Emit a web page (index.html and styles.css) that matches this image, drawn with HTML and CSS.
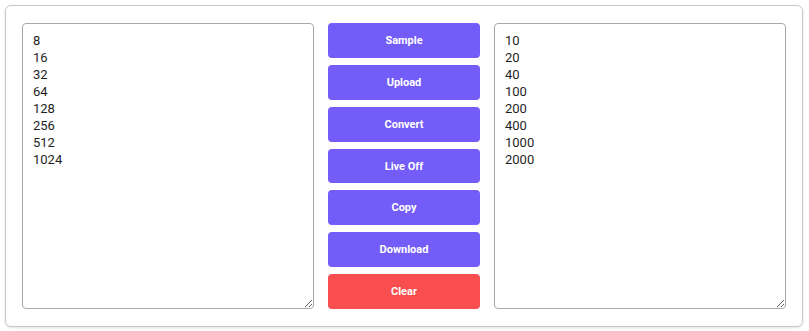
FILE: index.html
```html
<!DOCTYPE html>
<html>
<head>
<meta charset="utf-8">
<link rel="stylesheet" href="styles.css">
</head>
<body>
<div class="card">
  <textarea class="box">8
16
32
64
128
256
512
1024</textarea>
  <div class="actions">
    <button class="btn">Sample</button>
    <button class="btn">Upload</button>
    <button class="btn">Convert</button>
    <button class="btn">Live Off</button>
    <button class="btn">Copy</button>
    <button class="btn">Download</button>
    <button class="btn danger">Clear</button>
  </div>
  <textarea class="box">10
20
40
100
200
400
1000
2000</textarea>
</div>
</body>
</html>
```
FILE: styles.css
```css
html, body { margin: 0; padding: 0; background: #fff; }
body { padding: 5px; font-family: Roboto, "Liberation Sans", sans-serif; }
.card {
  width: 798px;
  height: 322px;
  box-sizing: border-box;
  border: 1px solid #c8c8c8;
  border-radius: 6px;
  box-shadow: 0 1px 3px rgba(0,0,0,0.12);
  padding: 17px 16px;
  display: flex;
  gap: 14px;
}
.box {
  width: 292px;
  height: 286px;
  box-sizing: border-box;
  border: 1px solid #a8a8a8;
  border-radius: 4px;
  padding: 8px 10px;
  margin: 0;
  font-family: Roboto, "Liberation Sans", sans-serif;
  font-size: 13px;
  line-height: 17px;
  color: #1f1f1f;
  resize: both;
  outline: none;
}
.actions {
  width: 152px;
  display: flex;
  flex-direction: column;
  gap: 7px;
}
.btn {
  flex: 1;
  border: none;
  border-radius: 4px;
  background: #735cf8;
  color: #fff;
  font-family: Roboto, "Liberation Sans", sans-serif;
  font-weight: 700;
  font-size: 11px;
  padding: 0;
}
.btn.danger { background: #f84e50; }
```
